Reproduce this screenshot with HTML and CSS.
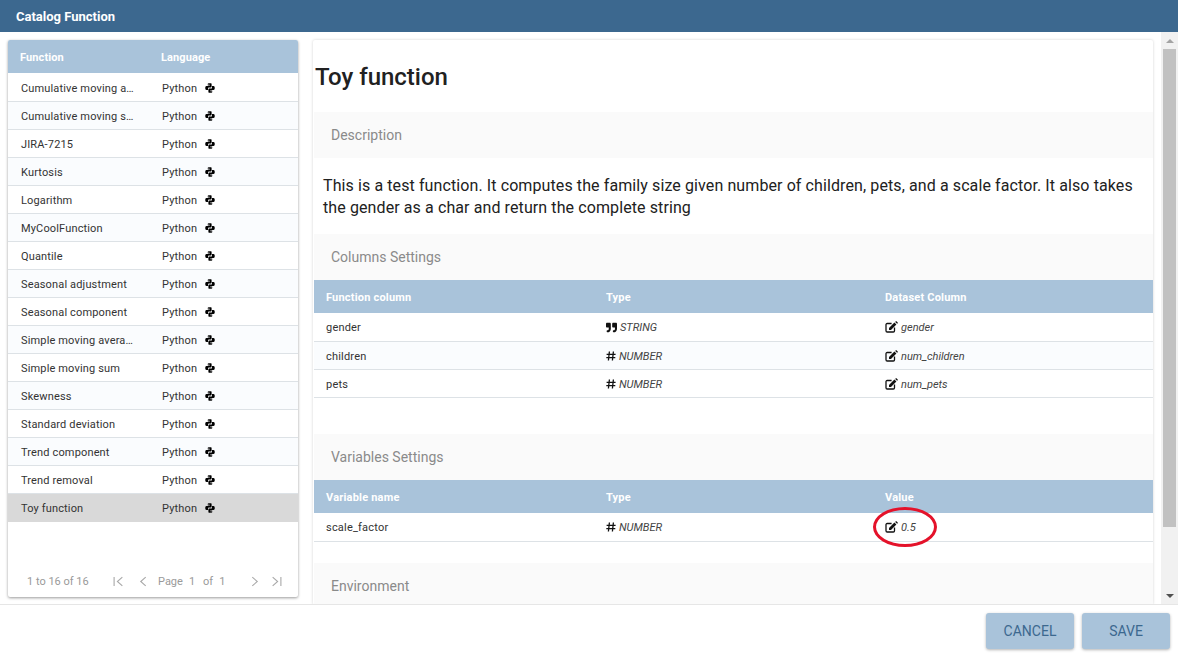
FILE: index.html
```html
<!DOCTYPE html>
<html lang="en">

<head>
  <meta charset="UTF-8">
  <title>Catalog Function</title>
  <link rel="stylesheet" href="styles.css">
</head>

<body>
  <svg class="defs" width="0" height="0">
    <symbol id="python" viewBox="0 0 10 10">
      <path fill-rule="evenodd" d="M3.200.2H6Q6.600.2 6.600.900V3.700Q6.600 4.400 5.900 4.400H3.800Q3 4.400 3 5.300V6.900H1.400Q.2 6.900.2 5 .2 2.900 1.400 2.900H4.800V2.400H2.800V.9Q2.800.2 3.200.2zM3.900.8a.4.4 0 1 0 .01 0z" />
      <path transform="rotate(180 5 5)" fill-rule="evenodd" d="M3.200.2H6Q6.600.2 6.600.900V3.700Q6.600 4.400 5.900 4.400H3.800Q3 4.400 3 5.300V6.900H1.400Q.2 6.900.2 5 .2 2.900 1.400 2.900H4.800V2.400H2.800V.9Q2.800.2 3.200.2zM3.900.8a.4.4 0 1 0 .01 0z" />
    </symbol>
    <symbol id="quote" viewBox="0 0 512 512">
      <path d="M464 32H336c-26.5 0-48 21.5-48 48v128c0 26.5 21.5 48 48 48h80v64c0 35.3-28.7 64-64 64h-8c-13.3 0-24 10.7-24 24v48c0 13.3 10.7 24 24 24h8c88.4 0 160-71.6 160-160V80c0-26.5-21.5-48-48-48zm-288 0H48C21.5 32 0 53.5 0 80v128c0 26.5 21.5 48 48 48h80v64c0 35.3-28.7 64-64 64h-8c-13.3 0-24 10.7-24 24v48c0 13.3 10.7 24 24 24h8c88.4 0 160-71.6 160-160V80c0-26.5-21.5-48-48-48z" />
    </symbol>
    <symbol id="hash" viewBox="0 0 10 10">
      <path d="M3.400.5 2.400 9.500M7.400.5 6.400 9.500M.6 3.300H9.600M.3 6.700H9.300" fill="none" stroke="currentColor" stroke-width="1.3" />
    </symbol>
    <symbol id="edit" viewBox="0 0 13 12">
      <path d="M6.600 2.500H2.200C1.500 2.500 1 3 1 3.700v6.100c0 .7.5 1.200 1.200 1.200h6.100c.7 0 1.200-.5 1.200-1.200V6.400" fill="none" stroke="currentColor" stroke-width="1.3" />
      <path d="M4 6.900 9.400 1.600l2 2L6 8.900H4zM10.200.9l.6-.6c.2-.2.5-.2.7 0l1.200 1.200c.2.2.2.5 0 .7l-.6.6z" />
    </symbol>
  </svg>

  <div class="dialog">
    <header class="titlebar">Catalog Function</header>

    <main class="main">
      <section class="catalog">
        <div class="catalog-head">
          <div class="col-name">Function</div>
          <div class="col-lang">Language</div>
        </div>
        <div class="catalog-rows">
          <div class="catalog-row"><div class="col-name">Cumulative moving a…</div><div class="col-lang">Python <svg class="py"><use href="#python" /></svg></div></div>
          <div class="catalog-row"><div class="col-name">Cumulative moving s…</div><div class="col-lang">Python <svg class="py"><use href="#python" /></svg></div></div>
          <div class="catalog-row"><div class="col-name">JIRA-7215</div><div class="col-lang">Python <svg class="py"><use href="#python" /></svg></div></div>
          <div class="catalog-row"><div class="col-name">Kurtosis</div><div class="col-lang">Python <svg class="py"><use href="#python" /></svg></div></div>
          <div class="catalog-row"><div class="col-name">Logarithm</div><div class="col-lang">Python <svg class="py"><use href="#python" /></svg></div></div>
          <div class="catalog-row"><div class="col-name">MyCoolFunction</div><div class="col-lang">Python <svg class="py"><use href="#python" /></svg></div></div>
          <div class="catalog-row"><div class="col-name">Quantile</div><div class="col-lang">Python <svg class="py"><use href="#python" /></svg></div></div>
          <div class="catalog-row"><div class="col-name">Seasonal adjustment</div><div class="col-lang">Python <svg class="py"><use href="#python" /></svg></div></div>
          <div class="catalog-row"><div class="col-name">Seasonal component</div><div class="col-lang">Python <svg class="py"><use href="#python" /></svg></div></div>
          <div class="catalog-row"><div class="col-name">Simple moving avera…</div><div class="col-lang">Python <svg class="py"><use href="#python" /></svg></div></div>
          <div class="catalog-row"><div class="col-name">Simple moving sum</div><div class="col-lang">Python <svg class="py"><use href="#python" /></svg></div></div>
          <div class="catalog-row"><div class="col-name">Skewness</div><div class="col-lang">Python <svg class="py"><use href="#python" /></svg></div></div>
          <div class="catalog-row"><div class="col-name">Standard deviation</div><div class="col-lang">Python <svg class="py"><use href="#python" /></svg></div></div>
          <div class="catalog-row"><div class="col-name">Trend component</div><div class="col-lang">Python <svg class="py"><use href="#python" /></svg></div></div>
          <div class="catalog-row"><div class="col-name">Trend removal</div><div class="col-lang">Python <svg class="py"><use href="#python" /></svg></div></div>
          <div class="catalog-row selected"><div class="col-name">Toy function</div><div class="col-lang">Python <svg class="py"><use href="#python" /></svg></div></div>
        </div>
        <div class="pager">
          <span class="pager-count">1 to 16 of 16</span>
          <svg class="pager-icon first" viewBox="0 0 10 10"><path d="M1 1V9M8.500 1 4 5l4.500 4" /></svg>
          <svg class="pager-icon prev" viewBox="0 0 10 10"><path d="M7 1 2.500 5 7 9" /></svg>
          <span class="pager-page">Page</span>
          <span class="pager-num">1</span>
          <span class="pager-of">of</span>
          <span class="pager-num">1</span>
          <svg class="pager-icon next" viewBox="0 0 10 10"><path d="M3 1 7.500 5 3 9" /></svg>
          <svg class="pager-icon last" viewBox="0 0 10 10"><path d="M9 1V9M1.500 1 6 5l-4.500 4" /></svg>
        </div>
      </section>

      <div class="detail-scroll">
        <article class="detail">
          <h2 class="detail-title">Toy function</h2>

          <h3 class="band">Description</h3>
          <p class="description">This is a test function. It computes the family size given number of children, pets, and a scale factor. It also takes the gender as a char and return the complete string</p>

          <h3 class="band">Columns Settings</h3>
          <div class="grid-head">
            <div>Function column</div>
            <div>Type</div>
            <div>Dataset Column</div>
          </div>
          <div class="grid-row first-row">
            <div>gender</div>
            <div class="cell-em"><svg class="ic-quote"><use href="#quote" /></svg>STRING</div>
            <div class="cell-em"><svg class="ic-edit"><use href="#edit" /></svg>gender</div>
          </div>
          <div class="grid-row alt-row">
            <div>children</div>
            <div class="cell-em"><svg class="ic-hash"><use href="#hash" /></svg>NUMBER</div>
            <div class="cell-em"><svg class="ic-edit"><use href="#edit" /></svg>num_children</div>
          </div>
          <div class="grid-row">
            <div>pets</div>
            <div class="cell-em"><svg class="ic-hash"><use href="#hash" /></svg>NUMBER</div>
            <div class="cell-em"><svg class="ic-edit"><use href="#edit" /></svg>num_pets</div>
          </div>

          <h3 class="band band-gap">Variables Settings</h3>
          <div class="grid-head">
            <div>Variable name</div>
            <div>Type</div>
            <div>Value</div>
          </div>
          <div class="grid-row first-row">
            <div>scale_factor</div>
            <div class="cell-em"><svg class="ic-hash"><use href="#hash" /></svg>NUMBER</div>
            <div class="cell-em cell-marked">
              <svg class="ic-edit"><use href="#edit" /></svg>0.5
              <span class="red-ring"></span>
            </div>
          </div>

          <h3 class="band band-env">Environment</h3>
        </article>
      </div>

      <div class="scrollbar">
        <span class="arrow arrow-up"></span>
        <span class="thumb"></span>
        <span class="arrow arrow-down"></span>
      </div>
    </main>

    <footer class="actions">
      <button class="btn">CANCEL</button>
      <button class="btn">SAVE</button>
    </footer>
  </div>
</body>

</html>
```

FILE: styles.css
```css
html,
body {
  margin: 0;
  height: 100%;
  overflow: hidden;
  background: #fff;
}

body {
  font-family: Roboto, "Liberation Sans", sans-serif;
  font-size: 11px;
  color: #333;
}

.defs {
  position: absolute;
}

.dialog {
  display: flex;
  flex-direction: column;
  height: 657px;
}

.titlebar {
  flex: 0 0 32px;
  box-sizing: border-box;
  padding: 1px 0 0 16px;
  line-height: 31px;
  background: #3c688f;
  color: #fff;
  font-size: 13px;
  font-weight: 700;
}

.main {
  flex: 0 0 573px;
  display: flex;
  overflow: hidden;
}

/* left list */
.catalog {
  flex: 0 0 290px;
  margin: 8px 0 8px 8px;
  display: flex;
  flex-direction: column;
  border-radius: 2px;
  background: #fff;
  box-shadow: 0 1px 3px rgba(0, 0, 0, 0.4);
}

.catalog-head,
.catalog-row {
  display: flex;
  align-items: center;
}

.catalog-head {
  flex: 0 0 33px;
  box-sizing: border-box;
  padding-top: 2px;
  background: #a9c3da;
  color: #fff;
  font-weight: 700;
  letter-spacing: 0.1px;
  border-radius: 2px 2px 0 0;
}

.catalog-row {
  box-sizing: border-box;
  height: 28px;
  padding-top: 1px;
  border-bottom: 1px solid #dde2e6;
  letter-spacing: 0.15px;
}

.catalog-row:first-child {
  height: 29px;
  padding-top: 2px;
}

.catalog-row:nth-child(even) {
  background: #fafcfe;
}

.catalog-row.selected {
  background: #d9d9d9;
  border-bottom-color: #d9d9d9;
}

.col-name {
  flex: 0 0 141px;
  box-sizing: border-box;
  padding: 0 0 0 13px;
  white-space: nowrap;
}

.catalog-head .col-name {
  padding-left: 12px;
}

.col-lang {
  flex: 1;
  display: flex;
  align-items: center;
  padding: 0 12px 0 13px;
}

.catalog-head .col-lang {
  padding-left: 12px;
}

.py {
  width: 10px;
  height: 10px;
  margin-left: 8px;
  fill: #000;
}

.pager {
  flex: 1;
  display: flex;
  align-items: flex-end;
  padding: 0 0 8px 19px;
  color: #9a9a9a;
  line-height: 14px;
}

.pager-count {
  width: 86px;
}

.pager-icon {
  width: 11px;
  height: 11px;
  margin-bottom: 2px;
  fill: none;
  stroke: #a8a8a8;
  stroke-width: 1;
}

.prev {
  margin-left: 14px;
}

.pager-page {
  margin-left: 9px;
}

.pager-num {
  margin-left: 6px;
}

.pager-of {
  margin-left: 8px;
}

.next {
  margin-left: 24px;
}

.last {
  margin-left: 11px;
}

/* right side */
.detail-scroll {
  flex: 0 0 840px;
  overflow: hidden;
  padding: 8px 8px 0 15px;
}

.detail {
  height: 100%;
  padding: 0 0 0 1px;
  border-radius: 2px;
  background: #fff;
  box-shadow: 0 0 3px rgba(0, 0, 0, 0.18);
}

.detail-title {
  margin: 0;
  height: 72px;
  padding-left: 1px;
  line-height: 74px;
  font-size: 24px;
  font-weight: 500;
  color: #212121;
}

.band {
  margin: 0;
  height: 46px;
  padding-left: 17px;
  line-height: 46px;
  background: #fafafa;
  color: #8a8a8a;
  font-size: 14px;
  font-weight: 400;
}

.band-gap {
  margin-top: 36px;
}

.band-env {
  margin-top: 21px;
}

.description {
  margin: 0;
  height: 76px;
  box-sizing: border-box;
  padding: 17px 9px 0;
  font-size: 16px;
  line-height: 22px;
  letter-spacing: 0.1px;
  color: #212121;
}

.grid-head,
.grid-row {
  display: grid;
  grid-template-columns: 280px 279px 1fr;
  align-items: center;
}

.grid-head > div,
.grid-row > div {
  padding-left: 12px;
}

.grid-head {
  height: 33px;
  box-sizing: border-box;
  padding-top: 2px;
  background: #a9c3da;
  color: #fff;
  font-weight: 700;
  letter-spacing: 0.2px;
}

.grid-row {
  box-sizing: border-box;
  height: 28px;
  padding-top: 1px;
  border-bottom: 1px solid #dde2e6;
  letter-spacing: 0.2px;
}

.first-row {
  height: 29px;
  padding-top: 0;
}

.alt-row {
  background: #fafcfe;
}

.grid-row .cell-em {
  display: flex;
  align-items: center;
  font-style: italic;
  font-size: 11px;
  letter-spacing: 0;
  color: #444;
}

.ic-quote {
  width: 11px;
  height: 11px;
  margin-right: 3px;
  fill: #111;
}

.ic-hash {
  width: 10px;
  height: 10px;
  margin-right: 3px;
  color: #111;
}

.ic-edit {
  width: 13px;
  height: 12px;
  margin-right: 3px;
  color: #111;
  fill: #111;
}

.cell-marked {
  position: relative;
}

/* red hand drawn mark around the value */
.red-ring {
  position: absolute;
  left: 0;
  top: 50%;
  width: 64px;
  height: 40px;
  box-sizing: border-box;
  transform: translateY(-50%);
  border: 3px solid #e4122a;
  border-radius: 50%;
}

/* drawn scrollbar, the page itself does not scroll here */
.scrollbar {
  flex: 0 0 17px;
  display: flex;
  flex-direction: column;
  align-items: center;
  background: #f1f1f1;
}

.arrow {
  width: 0;
  height: 0;
  border-left: 4px solid transparent;
  border-right: 4px solid transparent;
}

.arrow-up {
  margin: 7px 0 6px;
  border-bottom: 4px solid #a3a3a3;
}

.arrow-down {
  margin: auto 0 7px;
  border-top: 4px solid #505050;
}

.thumb {
  width: 13px;
  height: 478px;
  background: #c1c1c1;
}

.actions {
  flex: 1;
  display: flex;
  justify-content: flex-end;
  align-items: flex-start;
  gap: 8px;
  padding: 8px 8px 0 0;
  border-top: 1px solid #e6e6e6;
  margin-top: -1px;
  position: relative;
  background: #fff;
}

.btn {
  width: 88px;
  height: 36px;
  border: 0;
  border-radius: 3px;
  background: #a9c3da;
  color: #3c688f;
  font-family: inherit;
  font-size: 14px;
  box-shadow: 0 1px 3px rgba(0, 0, 0, 0.3);
}
```
